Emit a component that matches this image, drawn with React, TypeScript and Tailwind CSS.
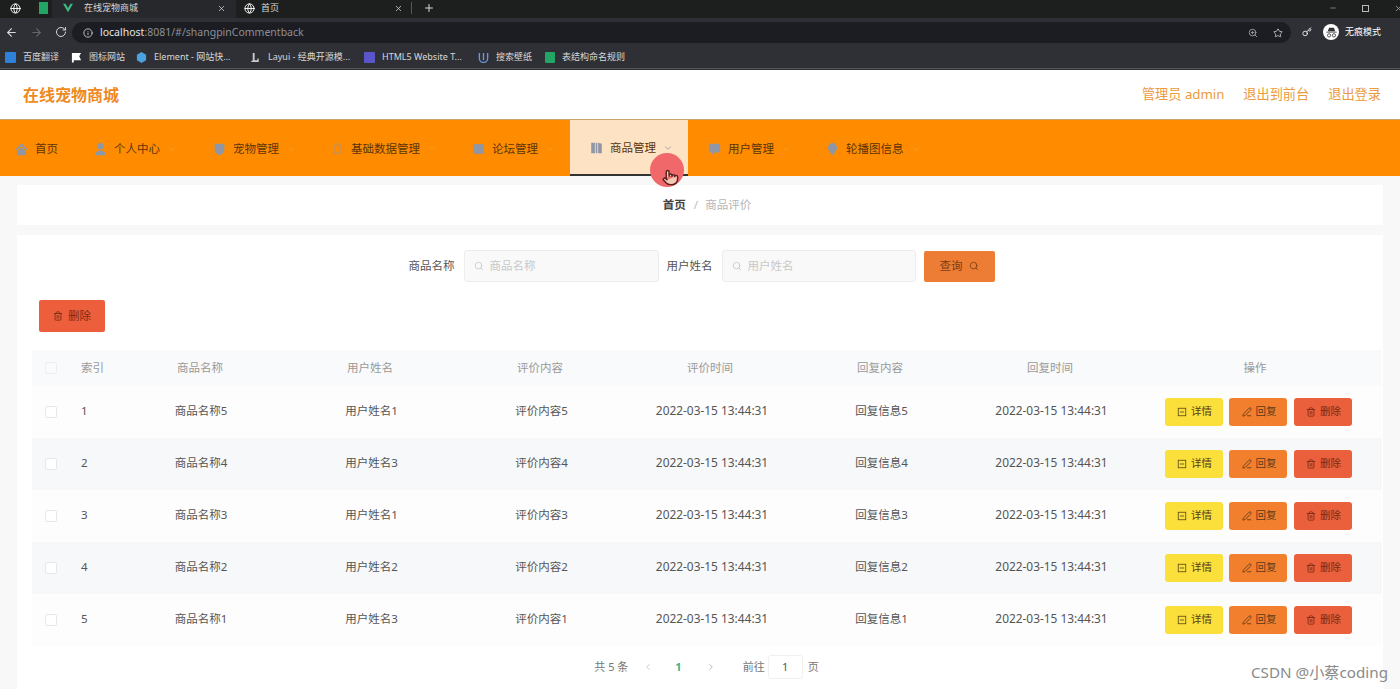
import { ArrowLeft, ArrowRight, ChevronDown, ChevronLeft, ChevronRight, Globe, Info, Key, Minus, PenLine, Plus, Pointer, RotateCw, Search, Star, Trash2, X, ZoomIn } from "lucide-react";
import type { ReactNode } from "react";

const font = { fontFamily: '"Noto Sans", "Noto Sans CJK SC", sans-serif' };

const iconPaths: Record<string, ReactNode> = {
  home: <path d="M8 1.500 0.500 8.500 2 9.500 8 4.500 14 9.500 15.500 8.500ZM2.500 10.500 8 6 13.500 10.500V15H2.500Z" />,
  user: <path d="M8 1a3.600 3.600 0 1 1 0 7.600A3.600 3.600 0 0 1 8 1ZM1.500 15c0-3.600 2.800-5.400 6.500-5.400s6.500 1.800 6.500 5.400Z" />,
  shield: <path d="M2 2h12v7c0 3-3 5-6 6-3-1-6-3-6-6Z" />,
  bell: <path d="M8 1.500c-3 0-4.500 2.200-4.500 5v5L2 13.500h12l-1.500-2v-5c0-2.800-1.500-5-4.500-5ZM6.500 14.500h3M4.500 7c0-2.200 1.300-4 3.500-4s3.500 1.800 3.500 4v5h-7Z" fillRule="evenodd" opacity="0.55" />,
  mail: <path d="M1.500 2.500h13v11h-13Z" />,
  book: <path d="M1.500 2h4.500v12H1.500ZM7 2h2v12H7ZM10 2l4.500 1v11H10Z" />,
  chat: <path d="M3 2h10a2 2 0 0 1 2 2v6a2 2 0 0 1-2 2H8l-3 2.500V12H3a2 2 0 0 1-2-2V4a2 2 0 0 1 2-2Z" />,
  pin: <path d="M8 1a5.500 5.500 0 0 1 5.500 5.500C13.500 10 10 13 8 15 6 13 2.500 10 2.500 6.500A5.500 5.500 0 0 1 8 1Z" />,
};

const navItems = [
  { label: "首页", icon: "home", w: "w-[74px] pl-[15px]", chevron: false },
  { label: "个人中心", icon: "user", w: "w-[118px] pl-5", chevron: true },
  { label: "宠物管理", icon: "shield", w: "w-[119px] pl-[21px]", chevron: true },
  { label: "基础数据管理", icon: "bell", w: "w-[141px] pl-5", chevron: true },
  { label: "论坛管理", icon: "mail", w: "w-[118px] pl-5", chevron: true },
  { label: "商品管理", icon: "book", w: "w-[118px] pl-5", chevron: true, active: true },
  { label: "用户管理", icon: "chat", w: "w-[118px] pl-5", chevron: true },
  { label: "轮播图信息", icon: "pin", w: "w-[141px] pl-5", chevron: true },
];

const rows = [
  { id: 1, goods: "商品名称5", user: "用户姓名1", comment: "评价内容5", reply: "回复信息5" },
  { id: 2, goods: "商品名称4", user: "用户姓名3", comment: "评价内容4", reply: "回复信息4" },
  { id: 3, goods: "商品名称3", user: "用户姓名1", comment: "评价内容3", reply: "回复信息3" },
  { id: 4, goods: "商品名称2", user: "用户姓名2", comment: "评价内容2", reply: "回复信息2" },
  { id: 5, goods: "商品名称1", user: "用户姓名3", comment: "评价内容1", reply: "回复信息1" },
];

const bookmarks = [
  { label: "百度翻译", w: "w-[66px]", icon: <div className="h-[11px] w-[11px] rounded-[1px] bg-[#2f80d8]" /> },
  {
    label: "图标网站",
    w: "w-[65px]",
    icon: (
      <svg viewBox="0 0 12 12" className="h-[11px] w-[11px] fill-white">
        <path d="M1 1h10l-2 3.500L11 9H3v2.500H1Z" />
      </svg>
    ),
  },
  {
    label: "Element - 网站快...",
    w: "w-[114px]",
    icon: (
      <svg viewBox="0 0 12 12" className="h-[11px] w-[11px] fill-[#4aa3e0]">
        <path d="M6 0 11 3v6l-5 3-5-3V3Z" />
      </svg>
    ),
  },
  {
    label: "Layui - 经典开源模...",
    w: "w-[114px]",
    icon: (
      <svg viewBox="0 0 12 12" className="h-[11px] w-[11px] fill-[#cccccc]">
        <path d="M3 1h2v8h3V7h1.500v4H1.500V9.500H3Z" />
      </svg>
    ),
  },
  { label: "HTML5 Website T...", w: "w-[114px]", icon: <div className="h-[11px] w-[11px] rounded-[1px] bg-[#5a55c8]" /> },
  {
    label: "搜索壁纸",
    w: "w-[67px]",
    icon: (
      <svg viewBox="0 0 12 12" className="h-[11px] w-[11px] fill-none stroke-[#6d95d8] stroke-[1.500]">
        <path d="M1.500 1v6a4.500 4.500 0 0 0 9 0V1M6 1v8" />
      </svg>
    ),
  },
  { label: "表结构命名规则", w: "w-[100px]", icon: <div className="h-[11px] w-[10px] rounded-[1px] bg-[#23a566]" /> },
];

function NavIcon({ name }: { name: string }) {
  return (
    <svg viewBox="0 0 16 16" preserveAspectRatio="none" className="h-[14px] w-[13px] shrink-0 fill-[#8f96a6]">
      {iconPaths[name]}
    </svg>
  );
}

function Cell({ children, shift }: { children: ReactNode; shift?: string }) {
  return <div className={`flex items-center justify-center ${shift ?? ""}`}>{children}</div>;
}

function ActionButton({ color, icon, label }: { color: string; icon: ReactNode; label: string }) {
  return (
    <button className={`flex h-7 w-[58px] items-center justify-center gap-[4px] rounded-[3px] pl-[2px] text-[10.500px] ${color}`}>
      {icon}
      {label}
    </button>
  );
}

function TicketIcon() {
  return (
    <svg viewBox="0 0 12 12" className="h-[10px] w-[10px] fill-none stroke-[#5a4a1a]">
      <rect x="1.500" y="1.500" width="9" height="9" />
      <path d="M3.500 6h5" />
    </svg>
  );
}

function IncognitoIcon() {
  return (
    <div className="ml-[11px] flex h-4 w-4 items-center justify-center rounded-full bg-white">
      <svg viewBox="0 0 16 16" className="h-[13px] w-[13px] fill-[#333]">
        <path d="M5 2h6l1.500 4.500H3.500ZM1.500 7h13v1h-13Z" />
        <circle cx="5" cy="11.500" r="2" fill="none" stroke="#333" />
        <circle cx="11" cy="11.500" r="2" fill="none" stroke="#333" />
      </svg>
    </div>
  );
}

function Browser() {
  return (
    <div className="h-[70px] bg-[#2e3036] text-[#d8d8d8]">
      <div className="flex h-[18px] items-center bg-[#1d1f1f] text-[9px]">
        <div className="-mt-[2px] flex w-[22px] justify-center pl-2"><Globe size={11} className="text-white" /></div>
        <div className="-mt-[2px] ml-[15px] flex w-[12px] justify-center"><div className="h-[12px] w-[9px] bg-[#23a566]" /></div>
        <div className="ml-[3px] flex h-full w-[184px] items-center bg-[#26282c] pb-[2px] pl-[11px]">
          <svg viewBox="0 0 12 12" className="mr-[11px] h-[10px] w-[10px] fill-[#41b883]"><path d="M0 1h3l3 5 3-5h3L6 11Z" /></svg>
          <span className="flex-1">在线宠物商城</span>
          <X size={9} className="mr-[10px]" />
        </div>
        <div className="flex h-full w-[175px] items-center pb-[2px] pl-[8px]">
          <Globe size={11} className="mr-[6px] text-white" />
          <span className="flex-1">首页</span>
          <X size={9} className="mr-[8px]" />
        </div>
        <div className="-mt-[2px] h-[12px] w-px bg-[#555]" />
        <Plus size={12} className="-mt-[2px] ml-[11px]" />
        <div className="-mr-[3px] -mt-[2px] ml-auto flex items-center gap-[25px] text-[#aaa]">
          <Minus size={8} />
          <div className="h-[7px] w-[7px] border border-[#bbb]" />
          <X size={9} />
        </div>
      </div>
      <div className="flex h-[28px] items-center">
        <div className="flex w-[72px] items-center gap-[12px] pl-[5px]">
          <ArrowLeft size={13} />
          <ArrowRight size={13} className="text-[#666]" />
          <RotateCw size={12} />
        </div>
        <div className="flex h-[21px] w-[1219px] items-center rounded-full bg-[#1c1d22] pl-[11px] pt-px text-[10.500px]">
          <Info size={10} className="mr-[7px]" />
          <span className="text-[#e4e4e4]">localhost</span>
          <span className="text-[#8d8f95]">:8081/#/shangpinCommentback</span>
          <ZoomIn size={10} className="ml-auto text-[#aaa]" />
          <Star size={10} className="ml-[15px] mr-[8px] text-[#ccc]" />
        </div>
        <Key size={10} className="ml-[11px] text-white" />
        <IncognitoIcon />
        <span className="ml-[6px] whitespace-nowrap text-[9px] text-white">无痕模式</span>
      </div>
      <div className="flex h-[23px] items-center border-b border-[#55565a] pl-[5px] text-[9px]">
        {bookmarks.map((b) => (
          <div key={b.label} className={`flex items-center gap-[7px] ${b.w}`}>
            {b.icon}
            <span className="whitespace-nowrap">{b.label}</span>
          </div>
        ))}
      </div>
    </div>
  );
}

function TableRow({ row }: { row: (typeof rows)[number] }) {
  const time = "2022-03-15 13:44:31";
  return (
    <div className={`grid h-[52px] grid-cols-[38px_45px_repeat(6,170px)_240px_7px] items-center text-[11.500px] text-[#555] ${row.id % 2 === 0 ? "bg-[#f7f8fa]" : "bg-[#fdfdfe]"}`}>
      <Cell><div className="h-[12px] w-[12px] rounded-[2px] border border-[#e8e8ea] bg-white" /></Cell>
      <div className="pb-[2px] pl-[11px]">{row.id}</div>
      <Cell shift="pb-[2px] pl-[2px]">{row.goods}</Cell>
      <Cell shift="pb-[2px] pl-[3px]">{row.user}</Cell>
      <Cell shift="pb-[2px] pl-[3px]">{row.comment}</Cell>
      <Cell shift="pb-[2px] pl-[4px] text-[11.900px]">{time}</Cell>
      <Cell shift="pb-[2px] pl-[3px]">{row.reply}</Cell>
      <Cell shift="pb-[2px] pl-[3px] text-[11.900px]">{time}</Cell>
      <div className="flex items-center justify-center gap-[6.500px] pl-[6px] text-[#5a3a1a]">
        <ActionButton color="bg-[#fbe03c]" icon={<TicketIcon />} label="详情" />
        <ActionButton color="bg-[#f27f2d]" icon={<PenLine size={10} />} label="回复" />
        <ActionButton color="bg-[#ea5f3c] text-[#7a2a14]" icon={<Trash2 size={10} />} label="删除" />
      </div>
      <div />
    </div>
  );
}

export default function App() {
  const headers = ["商品名称", "用户姓名", "评价内容", "评价时间", "回复内容", "回复时间", "操作"];
  return (
    <div className="relative h-[689px] w-[1400px] overflow-hidden bg-[#f8f8f8]" style={font}>
      <Browser />

      <header className="flex h-[50px] items-center justify-between border-b border-[#c9a26a] bg-white pl-[23px] pr-[19px]">
        <div className="text-base font-bold text-[#ee8a1f]">在线宠物商城</div>
        <div className="flex gap-[19px] pt-px text-[13.200px] text-[#eb9a3c]">
          <span>管理员 admin</span>
          <span>退出到前台</span>
          <span>退出登录</span>
        </div>
      </header>

      <nav className="flex h-[56px] bg-[#ff8c00] text-[11.500px] text-[#5c3408]">
        {navItems.map((item) => (
          <div
            key={item.label}
            className={`flex items-center gap-[7px] pt-px ${item.w} ${item.active ? "border-b-2 border-[#333] bg-[#fde3c4]" : ""}`}
          >
            <NavIcon name={item.icon} />
            <span>{item.label}</span>
            {item.chevron && <ChevronDown size={10} className={item.active ? "text-[#999]" : "text-[#f5a030]"} />}
          </div>
        ))}
      </nav>

      <div className="mx-[17px] mt-[9px] flex h-10 items-center justify-center bg-white pl-[14px] text-[11.500px]">
        <span className="font-bold text-[#444]">首页</span>
        <span className="ml-[8px] mr-[7px] text-[#bbb]">/</span>
        <span className="text-[#b5b5b5]">商品评价</span>
      </div>

      <main className="mx-[17px] mt-[10px] h-[454px] bg-white pt-[15px]">
        <div className="flex items-center justify-center pl-[3px] text-[11.500px]">
          <span className="mr-[9px] text-[#555]">商品名称</span>
          <div className="flex h-8 w-[195px] items-center gap-[6px] rounded-[3px] border border-[#ededed] bg-[#f9f9f9] pl-[9px] text-[#c8c8c8]">
            <Search size={10} />
            商品名称
          </div>
          <span className="ml-2 mr-[9px] text-[#555]">用户姓名</span>
          <div className="flex h-8 w-[194px] items-center gap-[6px] rounded-[3px] border border-[#ededed] bg-[#f9f9f9] pl-[9px] text-[#c8c8c8]">
            <Search size={10} />
            用户姓名
          </div>
          <button className="ml-2 flex h-[31px] w-[71px] items-center justify-center gap-[6px] rounded-[2px] bg-[#ed7d35] text-[#7a3e14]">
            查询
            <Search size={10} />
          </button>
        </div>

        <button className="ml-[22px] mt-[18px] flex h-8 w-[66px] items-center justify-center gap-[5px] rounded-[2px] bg-[#ed5f3c] text-[11.500px] text-[#7a2a14]">
          <Trash2 size={10} />
          删除
        </button>

        <div className="ml-[15px] mt-[18px] w-[1350px]">
          <div className="grid h-9 grid-cols-[38px_45px_repeat(6,170px)_240px_7px] items-center bg-[#f9fafb] text-[11.500px] text-[#999]">
            <Cell><div className="h-[12px] w-[12px] rounded-[2px] border border-[#eeeeee] bg-[#fafafa]" /></Cell>
            <div className="pl-[11px]">索引</div>
            {headers.map((h) => (
              <Cell key={h}>{h}</Cell>
            ))}
            <div />
          </div>
          {rows.map((row) => (
            <TableRow key={row.id} row={row} />
          ))}
        </div>

        <div className="mt-[9px] flex h-[24px] items-center justify-center pl-[13px] text-[11px] text-[#777]">
          <span>共 5 条</span>
          <ChevronLeft size={10} className="ml-[15px] text-[#c0c0c0]" />
          <span className="ml-[22px] mr-[24px] font-bold text-[#3cb48c]">1</span>
          <ChevronRight size={10} className="text-[#aaa]" />
          <span className="ml-[27px]">前往</span>
          <div className="ml-[3px] mr-[5px] flex h-[24px] w-[35px] items-center justify-center rounded-[3px] border border-[#f0f0f0] text-[#555]">1</div>
          <span>页</span>
        </div>
      </main>

      <div className="absolute left-[650px] top-[153px] h-[34px] w-[34px] rounded-full bg-[#f0686a]" />
      <Pointer size={17} className="absolute left-[662px] top-[169px] fill-[#f6c7b5] text-[#5a2020]" />
      <div className="absolute left-[1251px] top-[661px] text-[15.200px] text-[#8a8a8a]">CSDN @小蔡coding</div>
    </div>
  );
}
